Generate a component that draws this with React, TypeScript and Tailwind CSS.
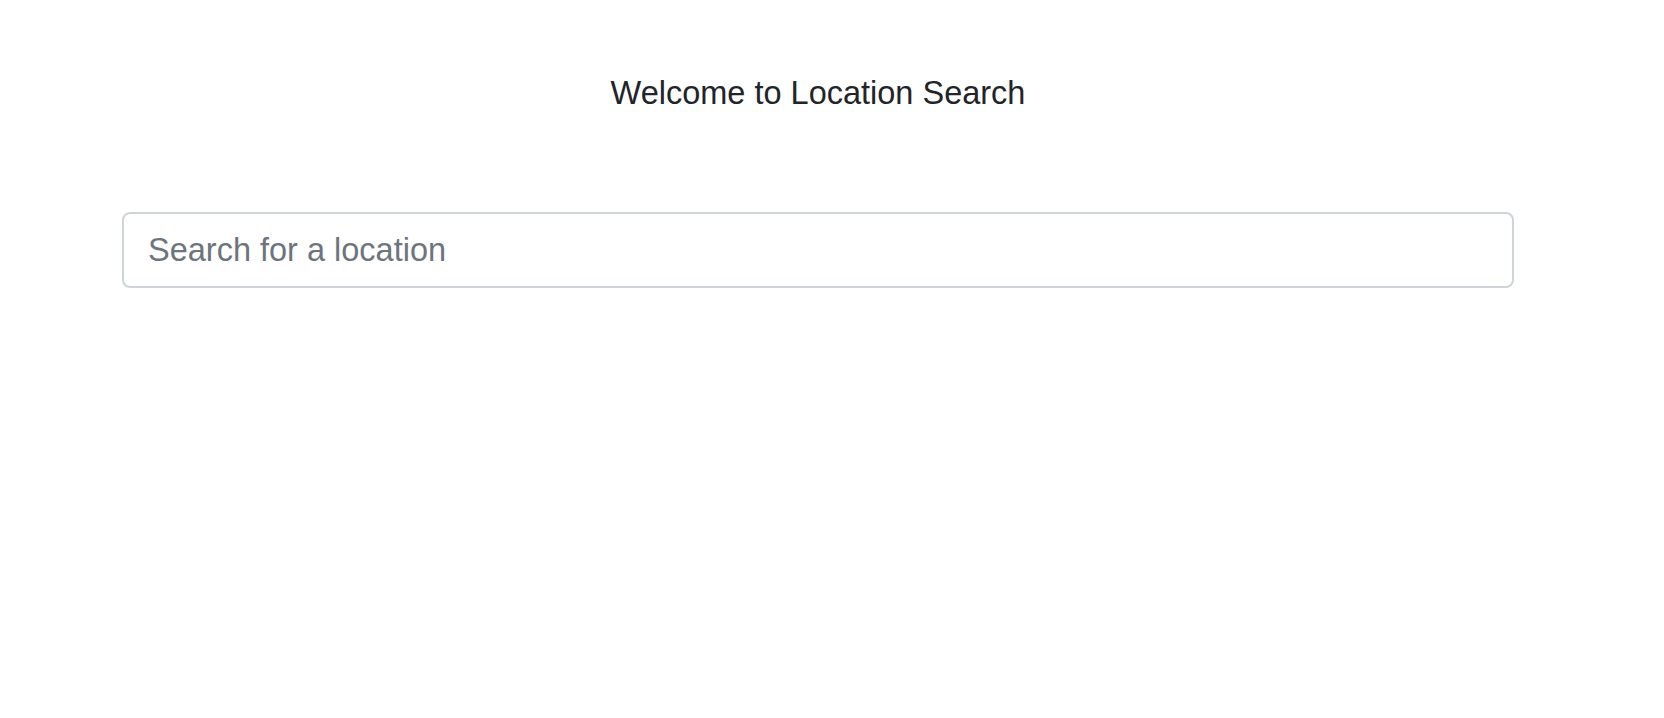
import { useState } from 'react';

export default function App() {
  const [query, setQuery] = useState('');

  return (
    <div className="min-h-screen bg-white font-['Liberation_Sans',Arial,sans-serif] text-[#212529]">
      <div className="ml-[122px] w-[1392px] pt-[69px]">
        {/* Title */}
        <h1 className="text-center text-[32.5px] leading-[48px] font-normal">Welcome to Location Search</h1>

        {/* Search */}
        <div className="mt-[95px]">
          <input
            type="text"
            value={query}
            onChange={(e) => setQuery(e.target.value)}
            placeholder="Search for a location"
            className="block w-full h-[76px] rounded-[8px] border-2 border-[#ced4da] bg-white pl-[24px] pr-[24px] text-[32.5px] text-[#495057] placeholder:text-[#6c757d] outline-none"
          />
        </div>
      </div>
    </div>
  );
}
